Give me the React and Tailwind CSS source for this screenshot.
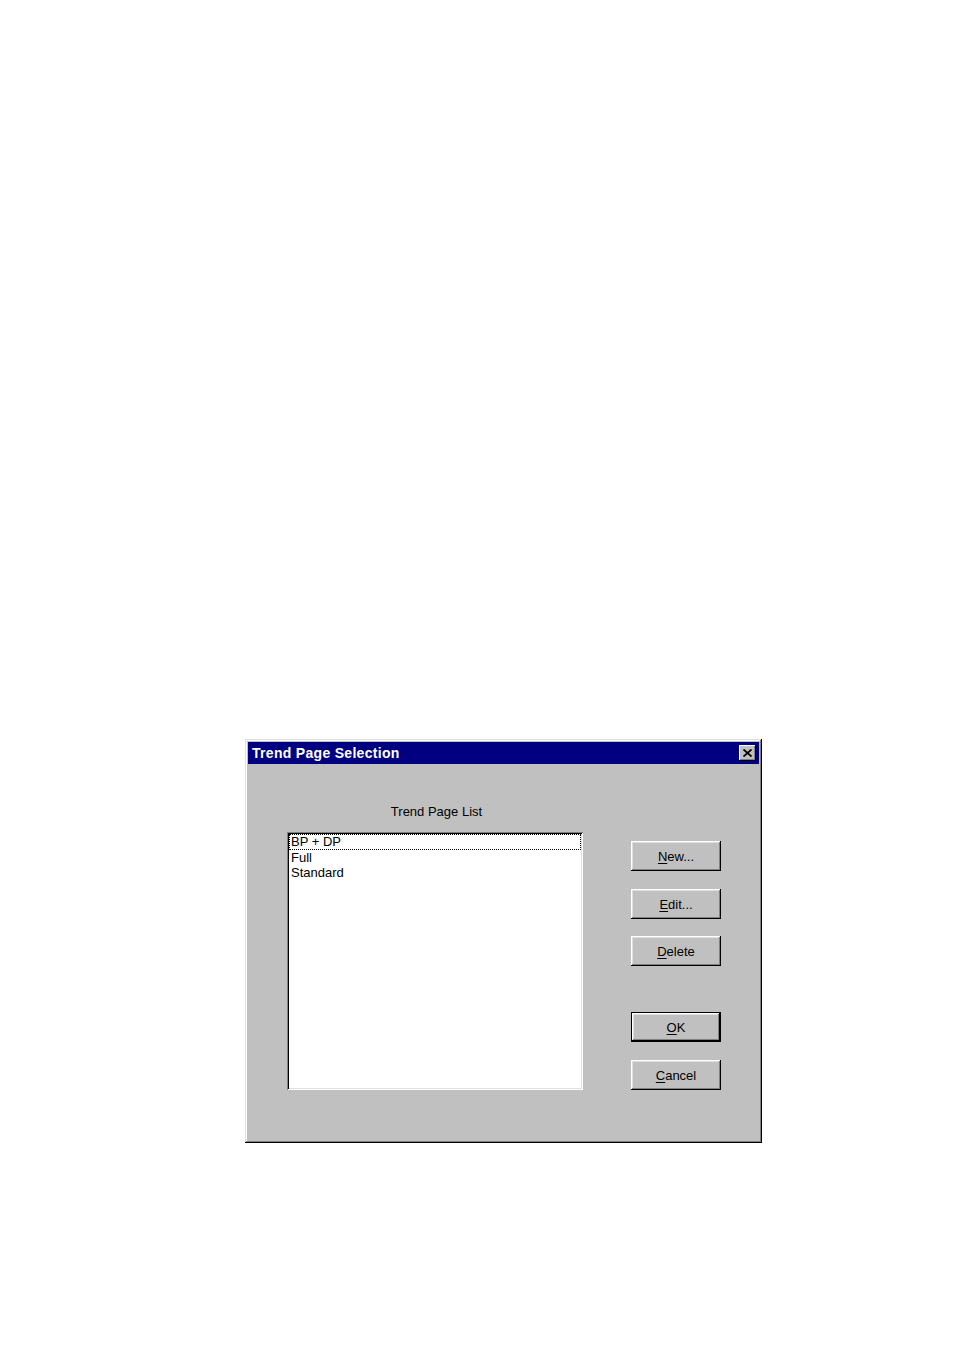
const FONT = { fontFamily: '"Liberation Sans", Arial, sans-serif' }

function Btn({ mnemonic, rest, isDefault }) {
  return (
    <div className={isDefault ? 'border border-black' : ''}>
      <button
        type="button"
        className={`flex items-center justify-center bg-[#c0c0c0] text-[13px] text-black leading-none shadow-[inset_-1px_-1px_0_#000,inset_1px_1px_0_#fff,inset_-2px_-2px_0_#808080,inset_2px_2px_0_#dfdfdf] ${isDefault ? 'w-[88px] h-[28px]' : 'w-[90px] h-[30px]'}`}
      >
        <span className="underline underline-offset-2">{mnemonic}</span>
        <span>{rest}</span>
      </button>
    </div>
  )
}

export default function App() {
  return (
    <div className="min-h-[1351px] w-[954px] bg-white pt-[739px] pl-[245px]" style={FONT}>
      <div className="w-[517px] h-[404px] bg-[#c0c0c0] p-[3px] shadow-[inset_-1px_-1px_0_#000,inset_1px_1px_0_#dfdfdf,inset_-2px_-2px_0_#808080,inset_2px_2px_0_#fff] flex flex-col">
        <div className="h-[22px] bg-[#000080] flex items-center justify-between pl-[4px] pr-[3px]">
          <span className="text-white font-bold text-[14px] tracking-[0.3px]">Trend Page Selection</span>
          <div className="w-[17px] h-[16px] bg-[#c0c0c0] flex items-center justify-center shadow-[inset_-1px_-1px_0_#000,inset_1px_1px_0_#fff,inset_-2px_-2px_0_#808080]">
            <svg width="9" height="8" viewBox="0 0 9 8">
              <path d="M0.5 0.5 L8.5 7.5 M8.5 0.5 L0.5 7.5" stroke="#000" strokeWidth="1.8" />
            </svg>
          </div>
        </div>

        <div className="flex pl-[39px]">
          <div className="flex flex-col pt-[40px] w-[296px]">
            <div className="h-[16px] text-[13px] leading-[16px] text-black text-center pl-[3px]">Trend Page List</div>
            <div className="mt-[12px] h-[258px] bg-white p-[2px] shadow-[inset_1px_1px_0_#808080,inset_-1px_-1px_0_#fff,inset_2px_2px_0_#000,inset_-2px_-2px_0_#dfdfdf] text-[13px] leading-[15px] text-black">
              <div className="border border-dotted border-black pl-[1px] h-[16px] leading-[14px]">BP + DP</div>
              <div className="pl-[2px]">Full</div>
              <div className="pl-[2px]">Standard</div>
            </div>
          </div>

          <div className="ml-[48px] pt-[77px] flex flex-col">
            <Btn mnemonic="N" rest="ew..." />
            <div className="mt-[18px]"><Btn mnemonic="E" rest="dit..." /></div>
            <div className="mt-[17px]"><Btn mnemonic="D" rest="elete" /></div>
            <div className="mt-[46px]"><Btn mnemonic="O" rest="K" isDefault /></div>
            <div className="mt-[18px]"><Btn mnemonic="C" rest="ancel" /></div>
          </div>
        </div>
      </div>
    </div>
  )
}
